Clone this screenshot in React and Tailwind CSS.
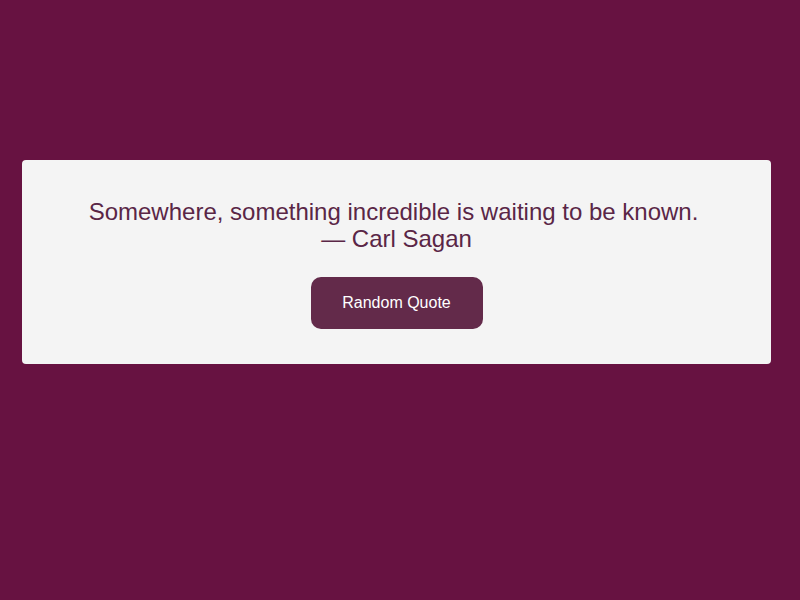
export default function App() {
  return (
    <div className="w-[800px] h-[600px] bg-[#671241] pt-[160px] pl-[22px]" style={{ fontFamily: '"Liberation Sans", Arial, sans-serif' }}>
      <div className="w-[749px] h-[204px] bg-[#f4f4f4] rounded-[4px] flex flex-col items-center pt-[38px]">
        <div className="text-[24px] leading-[27px] text-[#5a2646] text-center">
          <div className="pr-[6px]">Somewhere, something incredible is waiting to be known.</div>
          <div>— Carl Sagan</div>
        </div>
        <button className="mt-[25px] w-[172px] h-[52px] bg-[#632a4a] text-white text-[16px] rounded-[10px]">
          Random Quote
        </button>
      </div>
    </div>
  );
}
